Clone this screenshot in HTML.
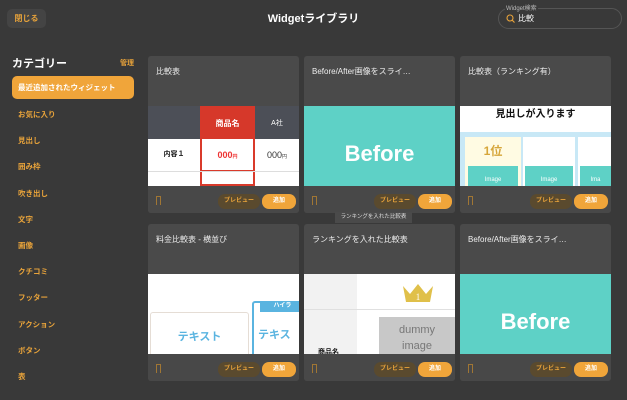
<!DOCTYPE html><html><head><meta charset="utf-8"><style>
*{margin:0;padding:0;box-sizing:border-box}
body{width:627px;height:400px;overflow:hidden;background:#393939;font-family:"Liberation Sans","Noto Sans CJK JP",sans-serif;color:#fff;position:relative}
.abs{position:absolute}
.close{left:7px;top:9px;width:39px;height:19px;background:#444;border-radius:5px;color:#e8a33a;font-size:8px;font-weight:bold;text-align:center;line-height:19px}
.title{left:0;width:627px;top:10px;text-align:center;font-size:11px;font-weight:bold}
.search{left:498px;top:8px;width:124px;height:21px;border:1px solid #555;border-radius:11px}
.search .lbl{position:absolute;left:6px;top:-6px;font-size:6px;color:#bbb;background:#393939;padding:0 1px}
.cat{left:12px;top:55px;font-size:11px;font-weight:bold}
.mg{left:120px;top:58px;font-size:7px;color:#e8a33a;font-weight:bold}
.item{left:18px;font-size:7.5px;color:#e8a33a;font-weight:bold}
.active{left:12px;top:76px;width:122px;height:23px;background:#f0a53a;border-radius:5px;color:#fff;font-size:7.5px;font-weight:bold;padding-left:6px;line-height:23px}
.card{position:absolute;width:151px;height:157px;background:#4a4a4a;border-radius:3px;overflow:hidden}
.card .h{position:absolute;left:8px;top:10px;font-size:8px;color:#eee}
.card .img{position:absolute;left:0;top:50px;width:151px;height:80px;overflow:hidden;background:#fff}
.card .f{position:absolute;left:0;top:130px;width:151px;height:27px;background:#484848}
.bm{position:absolute;left:8px;top:10px;width:5px;height:9px;border:1px solid #a07634;border-bottom:none}
.pv{position:absolute;left:70px;top:8px;width:42px;height:15px;background:#5a4a2e;border-radius:7px;color:#e8a33a;font-size:6px;font-weight:bold;text-align:center;line-height:15px}
.ad{position:absolute;left:114px;top:8px;width:34px;height:15px;background:#f0a53a;border-radius:7px;color:#fff;font-size:6px;font-weight:bold;text-align:center;line-height:15px}
.teal{background:#5ed1c6!important;color:#fff;font-weight:bold;font-size:22px;text-align:center}
</style></head><body>
<div class="abs close">閉じる</div>
<div class="abs title">Widgetライブラリ</div>
<div class="abs search"><span class="lbl">Widget検索</span>
<svg class="abs" style="left:7px;top:5px" width="9" height="9" viewBox="0 0 9 9"><circle cx="4" cy="4" r="3" fill="none" stroke="#e8a33a" stroke-width="1.1"/><path d="M6.2 6.2L8.5 8.5" stroke="#e8a33a" stroke-width="1.1"/></svg>
<span class="abs" style="left:19px;top:4px;font-size:8px">比較</span></div>
<div class="abs cat">カテゴリー</div><div class="abs mg">管理</div>
<div class="abs active">最近追加されたウィジェット</div>
<div class="abs item" style="top:109px">お気に入り</div>
<div class="abs item" style="top:135px">見出し</div>
<div class="abs item" style="top:161px">囲み枠</div>
<div class="abs item" style="top:188px">吹き出し</div>
<div class="abs item" style="top:214px">文字</div>
<div class="abs item" style="top:240px">画像</div>
<div class="abs item" style="top:266px">クチコミ</div>
<div class="abs item" style="top:292px">フッター</div>
<div class="abs item" style="top:319px">アクション</div>
<div class="abs item" style="top:345px">ボタン</div>
<div class="abs item" style="top:371px">表</div>

<div class="card" style="left:148px;top:56px"><div class="h">比較表</div>
<div class="img" style="background:#fff">
<div class="abs" style="left:0;top:0;width:151px;height:33px;background:#4c4f57"></div>
<div class="abs" style="left:52px;top:0;width:55px;height:80px;border:2px solid #d93a2b;border-top:none"></div>
<div class="abs" style="left:52px;top:0;width:55px;height:33px;background:#d6382a;font-size:8px;font-weight:bold;text-align:center;line-height:35px">商品名</div>
<div class="abs" style="left:107px;top:0;width:44px;height:33px;font-size:7px;text-align:center;line-height:35px">A社</div>
<div class="abs" style="left:0;top:33px;width:52px;font-size:7px;color:#222;font-weight:bold;text-align:center;line-height:32px">内容１</div>
<div class="abs" style="left:54px;top:33px;width:51px;font-size:9px;color:#e33;font-weight:bold;text-align:center;line-height:32px">000<small style="font-size:5px">円</small></div>
<div class="abs" style="left:107px;top:33px;width:44px;font-size:9px;color:#333;text-align:center;line-height:32px">000<small style="font-size:5px">円</small></div>
<div class="abs" style="left:54px;top:64px;width:51px;height:2px;background:#d93a2b"></div>
<div class="abs" style="left:0;top:65px;width:151px;height:1px;background:#ddd"></div>
</div><div class="f"><div class="bm"></div><div class="pv">プレビュー</div><div class="ad">追加</div></div></div>

<div class="card" style="left:304px;top:56px"><div class="h">Before/After画像をスライ…</div>
<div class="img teal" style="line-height:96px">Before</div>
<div class="f"><div class="bm"></div><div class="pv">プレビュー</div><div class="ad">追加</div></div></div>

<div class="card" style="left:460px;top:56px"><div class="h">比較表（ランキング有）</div>
<div class="img"><div class="abs" style="left:0;top:0;width:151px;height:26px;color:#111;font-size:10px;font-weight:bold;text-align:center;line-height:18px">見出しが入ります</div>
<div class="abs" style="left:0;top:26px;width:151px;height:54px;background:#c8e8f6"></div>
<div class="abs" style="left:5px;top:31px;width:56px;height:49px;background:#fffbe3"></div>
<div class="abs" style="left:63px;top:31px;width:52px;height:49px;background:#fff"></div>
<div class="abs" style="left:118px;top:31px;width:33px;height:49px;background:#fff"></div>
<div class="abs" style="left:5px;top:36px;width:56px;font-size:12px;color:#d6a63a;font-weight:bold;text-align:center">1位</div>
<div class="abs" style="left:8px;top:60px;width:50px;height:20px;background:#5ed1c6;font-size:6px;text-align:center;line-height:28px">Image</div>
<div class="abs" style="left:65px;top:60px;width:48px;height:20px;background:#5ed1c6;font-size:6px;text-align:center;line-height:28px">Image</div>
<div class="abs" style="left:120px;top:60px;width:31px;height:20px;background:#5ed1c6;font-size:6px;text-align:center;line-height:28px">Ima</div>
</div><div class="f"><div class="bm"></div><div class="pv">プレビュー</div><div class="ad">追加</div></div></div>

<div class="abs" style="left:335px;top:212px;width:77px;height:11px;background:#4a4a4a;font-size:5.5px;color:#ddd;text-align:center;line-height:11px">ランキングを入れた比較表</div>

<div class="card" style="left:148px;top:224px"><div class="h">料金比較表 - 横並び</div>
<div class="img"><div class="abs" style="left:2px;top:38px;width:99px;height:50px;border:1px solid #e5ddd5;border-radius:3px;color:#5ab4e0;font-size:11px;font-weight:bold;text-align:center;line-height:48px">テキスト</div>
<div class="abs" style="left:104px;top:27px;width:60px;height:60px;border:2px solid #5ab4e0;border-radius:3px"></div>
<div class="abs" style="left:112px;top:27px;width:45px;height:11px;background:#5ab4e0;font-size:6px;font-weight:bold;text-align:center;line-height:11px">ハイラ</div>
<div class="abs" style="left:110px;top:52px;color:#5ab4e0;font-size:11px;font-weight:bold">テキス</div>
</div><div class="f"><div class="bm"></div><div class="pv">プレビュー</div><div class="ad">追加</div></div></div>

<div class="card" style="left:304px;top:224px"><div class="h">ランキングを入れた比較表</div>
<div class="img"><div class="abs" style="left:0;top:0;width:53px;height:80px;background:#f2f2f2"></div>
<div class="abs" style="left:0;top:35px;width:151px;height:1px;background:#e0e0e0"></div>
<svg class="abs" style="left:97px;top:8px" width="34" height="22" viewBox="0 0 34 22"><path d="M2 4L9 12L17 2L25 12L32 4L29 20H5Z" fill="#e0c04a"/><text x="17" y="18" font-size="9" fill="#fff" text-anchor="middle" font-family="Liberation Serif">1</text></svg>
<div class="abs" style="left:75px;top:43px;width:76px;height:40px;background:#c8c8c8;color:#777;font-size:11px;text-align:center;line-height:16px;padding-top:5px">dummy<br>image</div>
<div class="abs" style="left:14px;top:73px;font-size:7px;color:#111;font-weight:bold">商品名</div>
</div><div class="f"><div class="bm"></div><div class="pv">プレビュー</div><div class="ad">追加</div></div></div>

<div class="card" style="left:460px;top:224px"><div class="h">Before/After画像をスライ…</div>
<div class="img teal" style="line-height:96px">Before</div>
<div class="f"><div class="bm"></div><div class="pv">プレビュー</div><div class="ad">追加</div></div></div>
</body></html>
